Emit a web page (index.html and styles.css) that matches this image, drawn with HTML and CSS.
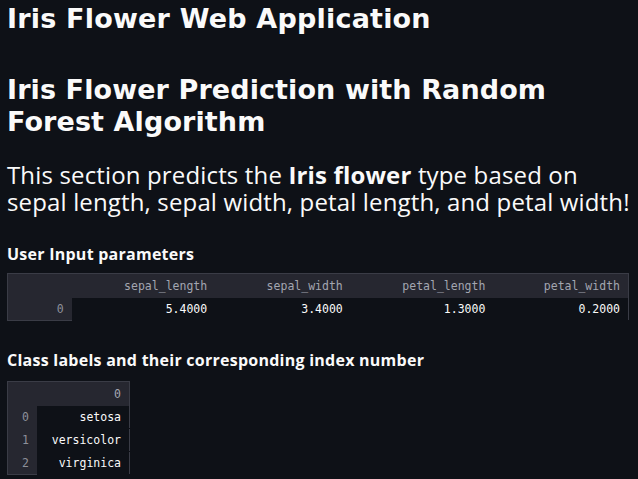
FILE: index.html
```html
<!DOCTYPE html>
<html>
<head>
<meta charset="utf-8">
<link rel="stylesheet" href="styles.css">
</head>
<body>
<main class="page">
  <h1 class="title">Iris Flower Web Application</h1>
  <h2 class="subtitle">Iris Flower Prediction with Random Forest Algorithm</h2>
  <p class="lead">This section predicts the <strong>Iris flower</strong> type based on sepal length, sepal width, petal length, and petal width!</p>

  <h3 class="section">User Input parameters</h3>
  <table class="grid grid-wide">
    <thead>
      <tr><th class="idx"></th><th class="c1">sepal_length</th><th class="c2">sepal_width</th><th class="c3">petal_length</th><th class="c4">petal_width</th></tr>
    </thead>
    <tbody>
      <tr><th class="idx">0</th><td>5.4000</td><td>3.4000</td><td>1.3000</td><td>0.2000</td></tr>
    </tbody>
  </table>

  <h3 class="section section-2">Class labels and their corresponding index number</h3>
  <table class="grid grid-narrow">
    <thead>
      <tr><th class="idx idx-s"></th><th class="val">0</th></tr>
    </thead>
    <tbody>
      <tr><th class="idx idx-s">0</th><td>setosa</td></tr>
      <tr><th class="idx idx-s">1</th><td>versicolor</td></tr>
      <tr><th class="idx idx-s">2</th><td>virginica</td></tr>
    </tbody>
  </table>
</main>
</body>
</html>
```

FILE: styles.css
```css
html, body {
  margin: 0;
  padding: 0;
  background: #0e1117;
  color: #fafafa;
  font-family: "Open Sans", "Noto Sans", sans-serif;
}

.page {
  padding: 0 0 0 7px;
}

.title {
  margin: 0;
  padding-top: 2px;
  font-family: "DejaVu Sans", "Open Sans", sans-serif;
  font-size: 27px;
  font-weight: 700;
  line-height: 34px;
  letter-spacing: 0.2px;
}

.subtitle {
  margin: 38px 0 0 0;
  width: 580px;
  font-family: "DejaVu Sans", "Open Sans", sans-serif;
  font-size: 27px;
  font-weight: 700;
  line-height: 32px;
  letter-spacing: 0.1px;
}

.lead {
  margin: 23px 0 0 0;
  font-size: 24px;
  font-weight: 400;
  line-height: 27px;
  letter-spacing: 0.15px;
}

.lead strong {
  font-weight: 700;
}

.section {
  margin: 29px 0 0 0;
  font-size: 16px;
  font-weight: 700;
  line-height: 20px;
  letter-spacing: 0.25px;
}

.section-2 {
  margin-top: 29px;
}

.grid {
  margin-top: 9px;
  border-collapse: collapse;
  font-family: "DejaVu Sans Mono", "Liberation Mono", monospace;
  font-size: 11.5px;
  border: 1px solid #3a3c46;
}

.grid th,
.grid td {
  text-align: right;
  padding: 0 8px;
  white-space: nowrap;
}

.grid thead th {
  background: #262730;
  color: #a3a6b0;
  font-weight: 400;
  height: 24px;
}

.grid tbody th {
  background: #262730;
  color: #8d909a;
  font-weight: 400;
}

.grid tbody td {
  background: #0e1117;
  color: #fafafa;
  height: 22px;
  border-bottom: 1px solid #0e1117;
}

.grid-wide {
  width: 622px;
}

.grid-wide .idx { width: 48px; }
.grid-wide .c1 { width: 128px; }
.grid-wide .c2 { width: 120px; }
.grid-wide .c3 { width: 127px; }
.grid-wide .c4 { width: 119px; }

.grid-narrow {
  width: 123px;
  margin-top: 11px;
}

.grid-narrow .idx-s { width: 13px; }
```
